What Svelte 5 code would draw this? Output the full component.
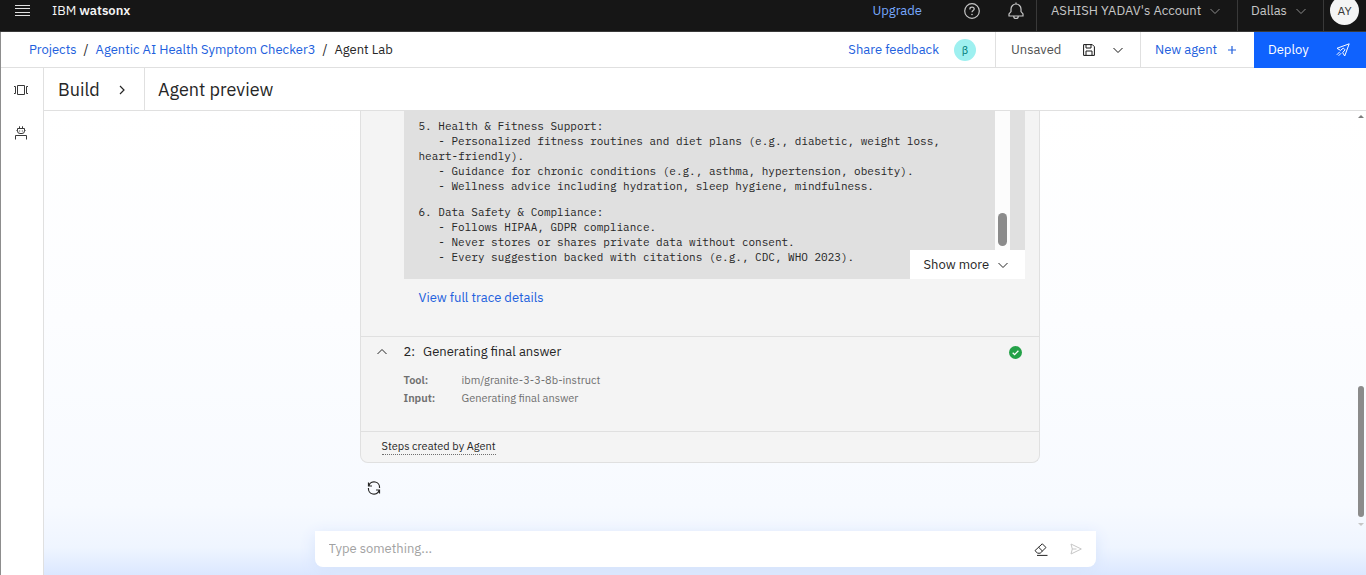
<script>
  let message = $state('');

  const sections = [
    [
      '5. Health & Fitness Support:',
      '   - Personalized fitness routines and diet plans (e.g., diabetic, weight loss, heart-friendly).',
      '   - Guidance for chronic conditions (e.g., asthma, hypertension, obesity).',
      '   - Wellness advice including hydration, sleep hygiene, mindfulness.'
    ],
    [
      '6. Data Safety & Compliance:',
      '   - Follows HIPAA, GDPR compliance.',
      '   - Never stores or shares private data without consent.',
      '   - Every suggestion backed with citations (e.g., CDC, WHO 2023).'
    ]
  ];
</script>

{#snippet chevron()}
  <svg class="chev" viewBox="0 0 12 12" aria-hidden="true"><path d="M1.5 4 6 8.5 10.5 4" /></svg>
{/snippet}

<div class="page">
  <header class="top">
    <button class="menu" aria-label="Menu">
      <svg width="16" height="14" viewBox="0 0 16 14"><path d="M0 1.500h15M0 4.500h15M0 8.500h15M0 11.500h15" /></svg>
    </button>
    <a class="brand" href="#home">IBM <strong>watsonx</strong></a>
    <a class="upgrade" href="#upgrade">Upgrade</a>
    <button class="help" aria-label="Help">
      <svg width="16" height="16" viewBox="0 0 16 16"><circle cx="8" cy="8" r="7.3" /><path d="M5.900 6.400V6c0-1 .8-1.800 2.100-1.800s2.200.8 2.200 1.900C10.200 7.500 8 7.600 8 9.300" /><circle class="dot" cx="8" cy="11.500" r=".8" /></svg>
    </button>
    <button class="bell" aria-label="Notifications">
      <svg width="16" height="18" viewBox="0 0 16 18"><path d="M8 .5v2M1 14h14v-2l-2-2.500V7a5 5 0 0 0-10 0v2.500L1 12zM5.700 14.200a2.300 2.300 0 0 0 4.600 0" /></svg>
    </button>
    <button class="account">ASHISH YADAV's Account {@render chevron()}</button>
    <button class="region">Dallas {@render chevron()}</button>
    <div class="profile"><button class="avatar" aria-label="Profile">AY</button></div>
  </header>

  <div class="shell">
    <div class="actions">
      <nav class="crumbs" aria-label="Breadcrumb">
        <a href="#projects">Projects</a><span>/</span><a href="#project">Agentic AI Health Symptom Checker3</a><span>/</span><span>Agent Lab</span>
      </nav>
      <div class="feedback"><a href="#feedback">Share feedback</a><span class="beta">β</span></div>
      <div class="save">
        <span>Unsaved</span>
        <button aria-label="Save">
          <svg width="12" height="12" viewBox="0 0 12 12"><path d="M.6.6h8.700l2.100 2.100v8.700H.6zM3 .6v3.400h5V.6M3 11.400V7h6v4.400" /></svg>
        </button>
        <button aria-label="Save options">{@render chevron()}</button>
      </div>
      <button class="new">New agent
        <svg width="8" height="8" viewBox="0 0 8 8"><path d="M4 0v8M0 4h8" /></svg>
      </button>
      <button class="deploy">Deploy
        <svg width="14" height="14" viewBox="0 0 14 14"><path d="M13.200.8 8.700 13 6.700 9.700 9 6.800 7.300 5.100 4.500 7.400 1 5.300zM3.800 8.800.8 11.800M5.200 10.200l-2.600 2.600" /></svg>
      </button>
    </div>

    <div class="body">
      <nav class="rail" aria-label="Views">
        <button aria-label="Sample questions">
          <svg width="14" height="12" viewBox="0 0 14 12"><path d="M3.500 1.500h7v9h-7zM0 2.500h1.500v7H0M14 2.500h-1.500v7H14" /></svg>
        </button>
        <button aria-label="Agent">
          <svg width="12" height="14" viewBox="0 0 12 14"><path d="M4.500.3v2M7.500.3v2M2.500 2.500h7v2.300a2.500 2.500 0 0 1-2.500 2.700H5a2.500 2.500 0 0 1-2.500-2.700zM1.500 4.500h1M9.500 4.500h1M4.700 4.500v1M7.300 4.500v1M.5 13.500v-4h11v4" /></svg>
        </button>
      </nav>

      <main>
        <div class="tabs">
          <button class="build">Build
            <svg width="8" height="10" viewBox="0 0 8 10"><path d="m2 1 4 4-4 4" /></svg>
          </button>
          <h1>Agent preview</h1>
        </div>

        <div class="chat">
          <div class="viewport">
            <div class="thread">
              <article class="card">
                <div class="trace">
                  <div class="output">
                    {#each sections as lines}
                      <section>{#each lines as line}<p>{line}</p>{/each}</section>
                    {/each}
                  </div>
                  <div class="bar"><i></i></div>
                  <button class="more">Show more {@render chevron()}</button>
                </div>
                <a class="details" href="#trace">View full trace details</a>
                <section class="step">
                  <button class="fold" aria-label="Collapse step">{@render chevron()}</button>
                  <h2><span>2:</span>Generating final answer</h2>
                  <svg class="ok" width="13" height="13" viewBox="0 0 13 13" role="img" aria-label="Completed"><circle cx="6.500" cy="6.500" r="6.500" /><path d="m3.700 6.700 1.900 1.900 3.800-3.800" /></svg>
                  <dl>
                    <dt>Tool:</dt><dd>ibm/granite-3-3-8b-instruct</dd>
                    <dt>Input:</dt><dd>Generating final answer</dd>
                  </dl>
                </section>
                <footer><span>Steps created by Agent</span></footer>
              </article>
              <button class="retry" aria-label="Regenerate">
                <svg width="14" height="14" viewBox="0 0 14 14"><path d="M1.500 1.500V5H5M1.800 4.700A5.500 5.500 0 0 1 12.500 7M12.500 12.500V9H9M12.200 9.300A5.500 5.500 0 0 1 1.500 7" /></svg>
              </button>
            </div>
            <div class="scroll"><b></b><i></i><b class="down"></b></div>
          </div>

          <form class="composer" onsubmit={(e) => e.preventDefault()}>
            <input aria-label="Message" placeholder="Type something..." bind:value={message} />
            <button type="button" aria-label="Clear chat">
              <svg width="14" height="13" viewBox="0 0 14 13"><path d="M8.300.8 12 4.500 6.200 10.200H3.500L1 7.600zM4.700 4.300l3.800 3.800M3 12.400h10.500" /></svg>
            </button>
            <button class="send" aria-label="Send">
              <svg width="12" height="12" viewBox="0 0 12 12"><path d="M1 1l10.300 5L1 11l1.300-5zM2.300 6h4.200" /></svg>
            </button>
          </form>
        </div>
      </main>
    </div>
  </div>
</div>

<style>
  :global(body) { margin: 0; }
  .page {
    display: flex;
    flex-direction: column;
    height: 100vh;
    overflow: hidden;
    background: #fff;
    color: #262626;
    font: 13px/18px "IBM Plex Sans", Roboto, "Liberation Sans", sans-serif;
  }
  .page * { box-sizing: border-box; }
  button {
    display: flex;
    align-items: center;
    padding: 0;
    border: 0;
    background: none;
    color: inherit;
    font: inherit;
    white-space: nowrap;
  }
  a { color: #2260dd; text-decoration: none; white-space: nowrap; }
  h1, h2, p, dl, dd { margin: 0; font-weight: 400; }
  svg { flex: none; fill: none; stroke: currentColor; stroke-width: 1; }
  .chev { width: 12px; height: 12px; stroke-width: 1; }

  .top {
    display: flex;
    flex: none;
    align-items: center;
    height: 42px;
    margin-top: -10px;
    padding-left: 15px;
    border-bottom: 1px solid #393939;
    background: #161616;
    color: #c6c6c6;
  }
  .menu { color: #e0e0e0; }
  .brand { margin-left: 21px; color: #f4f4f4; }
  .brand strong { font-weight: 600; }
  .upgrade { margin-left: auto; color: #78a9ff; }
  .help { margin-left: 42px; }
  .help svg, .bell svg { stroke-width: 1.2; }
  .help .dot { fill: currentColor; stroke: none; }
  .bell { margin: 0 12px 0 28px; }
  .account, .region {
    justify-content: space-between;
    align-self: stretch;
    border-left: 1px solid #393939;
  }
  .account { width: 201px; padding: 0 16px 0 14px; }
  .region { width: 86px; padding: 0 16px 0 13px; }
  .top .chev { color: #8d8d8d; }
  .profile {
    display: flex;
    align-items: center;
    align-self: stretch;
    width: 43px;
    padding-left: 6px;
    border-left: 1px solid #393939;
  }
  .avatar {
    justify-content: center;
    width: 29px;
    height: 29px;
    border-radius: 50%;
    background: #f4f4f4;
    color: #393939;
    font-size: 12px;
  }

  .shell {
    display: flex;
    flex: 1;
    flex-direction: column;
    min-height: 0;
    border-left: 1px solid #8d8d8d;
  }
  .actions { display: flex; flex: none; height: 36px; border-bottom: 1px solid #e0e0e0; }
  .crumbs { display: flex; align-items: center; gap: 7px; flex: 1; padding-left: 28px; }
  .feedback { display: flex; align-items: center; gap: 15px; padding-right: 19px; }
  .beta {
    width: 22px;
    height: 22px;
    border-radius: 50%;
    background: #9ef0f0;
    color: #007d79;
    font-size: 11px;
    line-height: 22px;
    text-align: center;
  }
  .save {
    display: flex;
    align-items: center;
    gap: 22px;
    width: 145px;
    padding-left: 15px;
    border-left: 1px solid #e0e0e0;
    color: #525252;
  }
  .save button { color: #161616; }
  .save button:last-child { margin-left: -5px; }
  .new {
    justify-content: space-between;
    width: 114px;
    padding: 0 18px 0 14px;
    border-left: 1px solid #e0e0e0;
    color: #2260dd;
  }
  .new svg { stroke-width: 1.2; }
  .deploy {
    justify-content: space-between;
    width: 112px;
    height: 36px;
    padding: 0 16px 0 14px;
    background: #0f62fe;
    color: #fff;
  }

  .body { display: flex; flex: 1; min-height: 0; }
  .rail {
    display: flex;
    flex: none;
    flex-direction: column;
    align-items: center;
    width: 43px;
    padding-right: 2px;
    border-right: 1px solid #e0e0e0;
    color: #393939;
  }
  .rail button { height: 43px; }
  main { display: flex; flex: 1; flex-direction: column; min-width: 0; }
  .tabs {
    display: flex;
    flex: none;
    align-items: center;
    height: 43px;
    border-bottom: 1px solid #e0e0e0;
  }
  .build {
    justify-content: space-between;
    align-self: stretch;
    width: 101px;
    padding: 2px 18px 0 14px;
    border-right: 1px solid #e0e0e0;
    font-size: 18px;
  }
  .build svg { stroke-width: 1.2; }
  h1 { padding: 2px 0 0 13px; font-size: 18px; }

  .chat {
    display: flex;
    flex: 1;
    flex-direction: column;
    min-height: 0;
    padding-bottom: 8px;
    background: linear-gradient(#fff 0%, #fcfdff 45%, #f7faff 85%, #eff5ff 94%, #dbe7ff 100%);
  }
  .viewport { display: flex; flex: 1; min-height: 0; }
  .thread {
    display: flex;
    flex: 1;
    flex-direction: column;
    align-items: flex-start;
    width: 100%;
    max-width: 680px;
    margin: 0 auto;
  }
  .card {
    width: 100%;
    border: solid #e0e0e0;
    border-width: 0 1px 1px;
    border-radius: 0 0 8px 8px;
    background: #f4f4f4;
  }
  .trace {
    position: relative;
    display: flex;
    height: 168px;
    margin: 0 14px 0 43px;
    padding-right: 15px;
    background: #e0e0e0;
  }
  .output {
    flex: 1;
    padding: 8px 28px 0 15px;
    font: 11px/15px "IBM Plex Mono", "Liberation Mono", monospace;
  }
  .output p { white-space: pre-wrap; }
  .output section + section { margin-top: 11px; }
  .bar {
    display: flex;
    align-items: flex-end;
    justify-content: center;
    width: 15px;
    height: 139px;
    padding-bottom: 4px;
    background: #fcfcfc;
  }
  .bar i { width: 9px; height: 33px; border-radius: 5px; background: #8b8b8b; }
  .more {
    position: absolute;
    right: 0;
    bottom: 0;
    justify-content: space-between;
    width: 115px;
    height: 29px;
    padding: 0 16px 0 14px;
    background: #fff;
  }
  .details { display: block; width: max-content; margin: 10px 0 29px 58px; }
  .step {
    display: grid;
    grid-template-columns: 28px 1fr 13px;
    align-items: center;
    row-gap: 10px;
    padding: 6px 17px 24px 15px;
    border-top: 1px solid #e0e0e0;
  }
  .fold .chev { transform: rotate(180deg); }
  h2 { font-size: 13px; }
  h2 span { margin-right: 8px; }
  .ok circle { fill: #24a148; stroke: none; }
  .ok path { stroke: #fff; stroke-width: 1.300; }
  dl {
    grid-column: 2;
    display: grid;
    grid-template-columns: 58px 1fr;
    color: #6f6f6f;
    font-size: 11px;
  }
  dt { font-weight: 600; }
  footer {
    height: 31px;
    padding: 7px 21px;
    border-top: 1px solid #e0e0e0;
    font-size: 11px;
    line-height: 15px;
  }
  footer span { display: block; width: max-content; border-bottom: 1px dotted #6f6f6f; }
  .retry { margin: 18px 0 0 7px; }
  .retry svg { stroke-width: 1.200; }
  .scroll {
    display: flex;
    flex-direction: column;
    align-items: center;
    width: 11px;
    padding: 4px 0 1px;
  }
  .scroll i { width: 6px; height: 131px; margin: auto 0 6px; border-radius: 3px; background: #8b8b8b; }
  .scroll b { border: solid transparent; border-width: 0 3px 3px; border-bottom-color: #7d7d7d; }
  .scroll .down { border-width: 3px 3px 0; border-top-color: #c6c6c6; }

  .composer {
    display: flex;
    align-items: center;
    width: calc(100% - 32px);
    max-width: 781px;
    height: 36px;
    margin: 4px auto 0;
    padding: 0 14px;
    border-radius: 0 0 8px 8px;
    background: #fff;
    box-shadow: 0 4px 16px #d6e3fb;
  }
  .composer input {
    flex: 1;
    min-width: 0;
    padding: 0;
    border: 0;
    outline: 0;
    background: none;
    font: inherit;
  }
  .composer input::placeholder { color: #a2a2a2; }
  .send { margin-left: 22px; color: #c6c6c6; }
</style>
